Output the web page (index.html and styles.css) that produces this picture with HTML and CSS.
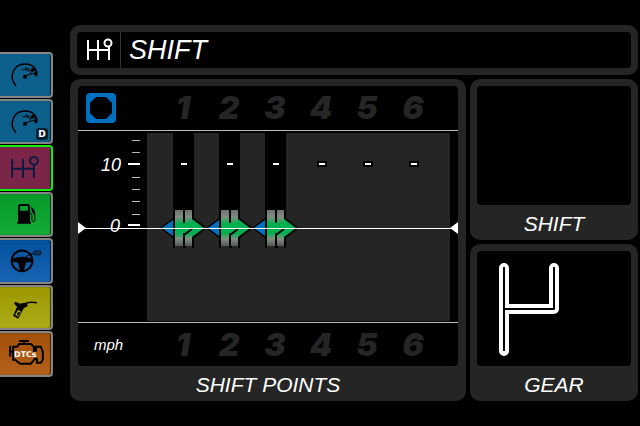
FILE: index.html
```html
<!DOCTYPE html>
<html lang="en">
  <head>
    <meta charset="UTF-8" />
    <title>Shift</title>
    <link rel="stylesheet" href="styles.css">
  </head>
  <body>
    <nav class="sidebar">
      <button class="tab teal" aria-label="Gauge">
        <svg viewBox="0 0 51 42">
          <path class="line" d="M16 32C8 24 13 10 25 10c7 0 11 4 12 9" />
          <path class="thin" d="M25 22l11-3M22 16c5-1 8 1 9 4M25 14c3 0 5 2 7 4" />
          <circle cx="25" cy="23" r="2" /><circle cx="33" cy="16" r="2" /><path d="M35 18l3 1-1 4-3-2z" />
        </svg>
      </button>
      <button class="tab teal" aria-label="Gauge D">
        <svg viewBox="0 0 51 42">
          <path class="line" d="M16 32C8 24 13 10 25 10c7 0 11 4 12 9" />
          <path class="thin" d="M25 22l11-3M22 16c5-1 8 1 9 4M25 14c3 0 5 2 7 4" />
          <circle cx="25" cy="23" r="2" /><circle cx="33" cy="16" r="2" /><path d="M35 18l3 1-1 4-3-2z" />
        </svg>
        <span class="badge">D</span>
      </button>
      <button class="tab plum active" aria-label="Shift">
        <svg viewBox="0 0 51 42">
          <path class="navy" d="M12 12v19M23 12v19M12 22h22M34 18v13" />
          <circle class="navy" cx="34" cy="14" r="4" />
        </svg>
      </button>
      <button class="tab green" aria-label="Fuel">
        <svg viewBox="0 0 51 42">
          <path fill-rule="evenodd" d="M18 28V12q0-2 2-2h8q2 0 2 2v16h1v2H17v-2zM20 12v5h8v-5z" />
          <path class="thin" d="M30 19q2 0 2 3v5q1 2 3 0v-7l-3-6" />
          <path d="M31 13l4 4v5l-3-4z" />
        </svg>
      </button>
      <button class="tab blue" aria-label="Steering">
        <svg viewBox="0 0 51 42">
          <circle class="ring" cx="22" cy="21" r="10.5" />
          <path d="M12 19q10-4 20 0v3l-6 1-2 8h-4l-2-8-6-1z" />
          <path class="thin" d="M26 17l4-3h4" />
          <rect class="navy-box" x="34" y="11" width="7" height="4" rx="1" />
        </svg>
      </button>
      <button class="tab yellow" aria-label="Fuel nozzle">
        <svg viewBox="0 0 51 42">
          <path fill-rule="evenodd" d="M15 15l5 2 5-1-1 5-6 11-5-3 4-9-3-3zM18 23l-3 5 3 2 3-5z" />
          <path d="M18 18l8-2 2 3-5 3z" />
          <path class="spout" d="M22 19l5-3q5-1 10 0" />
          <path d="M18 25l2 1-2 3-1-1z" />
        </svg>
      </button>
      <button class="tab orange" aria-label="Trouble codes">
        <svg viewBox="0 0 51 42">
          <path class="engine" d="M13 14h4l2-3h12l3 3v4h2v-4h5l2 5v8l-2 3h-4v-4h-2l-4 5H20l-5-4h-2zM24 11V8M19 8h10M10 13v11M10 19h3" />
          <text class="dtc" x="14" y="24">DTCs</text>
        </svg>
      </button>
    </nav>

    <main class="dashboard">
      <header class="title-bar">
        <div class="title-icon">
          <svg width="28" height="22" viewBox="0 0 28 22">
            <path d="M3 1v20M13 1v20M3 11h21M24 8v13" />
            <circle cx="23" cy="4" r="3.5" />
          </svg>
        </div>
        <h1>SHIFT</h1>
      </header>

      <section class="panel points">
        <div class="screen chart">
          <div class="gears">
            <div class="side">
              <button class="stop" aria-label="Stop">
                <svg width="30" height="30" viewBox="0 0 30 30"><path d="M10 4h10l6 6v10l-6 6H10l-6-6V10z" /></svg>
              </button>
            </div>
            <span>1</span><span>2</span><span>3</span><span>4</span><span>5</span><span>6</span>
          </div>
          <svg class="plot" viewBox="0 0 380 191">
            <defs>
              <linearGradient id="fade" x1="0" y1="0" x2="0" y2="1">
                <stop offset="0" stop-color="#707070" />
                <stop offset="0.2" stop-color="#7f8f80" />
                <stop offset="0.38" stop-color="#00b050" />
                <stop offset="0.65" stop-color="#00b050" />
                <stop offset="0.8" stop-color="#7f8f80" />
                <stop offset="1" stop-color="#555555" />
              </linearGradient>
              <g id="marker">
                <path d="M0 0h21v87l13 10-13 10v10h-2v-3h-6v3h-3v-3H2v3H0v-10l-13-10L0 87z" />
                <path fill="#0070c0" d="M0 89v16l-11-8z" />
                <path d="M0 79h2v38H0z" />
                <path fill="url(#fade)" d="M2 79h8v36H2zM12 79h7v36h-7z" />
                <path fill="#00b050" d="M9 92h4v10H9zM19 88l12 9-12 9z" />
                <path class="split" d="M11 117v-13l8-6" />
              </g>
            </defs>
            <rect class="area" x="69" y="2" width="303" height="188" />
            <g class="ticks">
              <path d="M54 9h8M54 21h8M54 46h8M54 58h8M54 70h8M54 83h8" />
              <path class="major" d="M50 33h12M50 94h12" />
            </g>
            <use href="#marker" x="95" y="0" />
            <use href="#marker" x="141" y="0" />
            <use href="#marker" x="187" y="0" />
            <path class="dash-edge" d="M101 33h10M147 33h10M193 33h10M239 33h10M285 33h10M331 33h10" />
            <path class="dash" d="M103 33h6M149 33h6M195 33h6M241 33h6M287 33h6M333 33h6" />
            <text x="43" y="40">10</text>
            <text x="42" y="101">0</text>
            <rect class="level" x="0" y="97" width="380" height="1" />
            <path class="end" d="M0 91l8 6-8 6zM380 91l-8 6 8 6z" />
          </svg>
          <div class="gears">
            <div class="side unit">mph</div>
            <span>1</span><span>2</span><span>3</span><span>4</span><span>5</span><span>6</span>
          </div>
        </div>
        <h2>SHIFT POINTS</h2>
      </section>

      <div class="right">
        <section class="panel">
          <div class="screen"></div>
          <h2>SHIFT</h2>
        </section>
        <section class="panel">
          <div class="screen">
            <svg class="gate" viewBox="0 0 154 114">
              <path class="outer" d="M27 17v83M27 58h50V17" />
              <path class="inner" d="M27 16v84M28 58h49V16" />
            </svg>
          </div>
          <h2>GEAR</h2>
        </section>
      </div>
    </main>
  </body>
</html>
```

FILE: styles.css
```css
* {
  box-sizing: border-box;
}

body {
  margin: 0;
  height: 100vh;
  display: flex;
  gap: 17px;
  background: #000000;
  color: #ffffff;
  font-family: "Liberation Sans", Arial, sans-serif;
}

/* Sidebar */
.sidebar {
  width: 53px;
  padding: 52px 0 49px;
  display: flex;
  flex-direction: column;
  gap: 1px;
}

.tab {
  position: relative;
  flex: 1;
  min-height: 0;
  padding: 0;
  border: 2px solid #858585;
  border-left: none;
  border-radius: 0 4px 4px 0;
  box-shadow: inset -1px 0 1px rgba(0, 0, 0, 0.6);
  cursor: pointer;
}

.tab svg {
  display: block;
  width: 100%;
  height: 100%;
}

.tab.active {
  border-color: #14f014;
}

.teal {
  background: #0e608c;
}

.plum {
  background: #7b2549;
}

.green {
  background: linear-gradient(#06982a, #16ac38);
}

.blue {
  background: linear-gradient(#03509b, #1964b4);
}

.yellow {
  background: linear-gradient(#9b9800, #adab18);
}

.orange {
  background: linear-gradient(#a35109, #b2601b);
}

.line,
.thin,
.spout,
.ring,
.navy,
.engine {
  fill: none;
  stroke: #000000;
  stroke-width: 2;
}

.line,
.spout {
  stroke-width: 1.5;
}

.thin {
  stroke-width: 1;
}

.navy {
  stroke: #0b1b3f;
}

.navy-box {
  fill: #17335c;
  stroke: #06182f;
}

.dtc {
  fill: #ffffff;
  font: bold 8px "DejaVu Sans", sans-serif;
}

.badge {
  position: absolute;
  right: 3px;
  bottom: 2px;
  width: 12px;
  height: 12px;
  border-radius: 3px;
  background: #07202f;
  color: #ffffff;
  font: bold 9px/12px "DejaVu Sans", sans-serif;
}

/* Dashboard */
.dashboard {
  flex: 1;
  display: grid;
  grid-template-columns: 396fr 168fr;
  grid-template-rows: auto 1fr;
  gap: 4px;
  padding: 25px 2px 25px 0;
}

.title-bar,
.panel {
  background: #252525;
  border-radius: 10px;
}

.title-bar {
  grid-column: 1 / -1;
  height: 50px;
  padding: 7px;
  display: flex;
}

.title-icon {
  width: 44px;
  display: flex;
  align-items: center;
  justify-content: center;
  border-right: 1px solid #333333;
  border-radius: 4px 0 0 4px;
  background: #000000;
}

.title-icon svg {
  fill: none;
  stroke: #ffffff;
  stroke-width: 2;
  overflow: visible;
}

h1,
h2 {
  margin: 0;
  font-style: italic;
  font-weight: normal;
}

h1 {
  flex: 1;
  padding-left: 8px;
  border-radius: 0 4px 4px 0;
  background: #000000;
  font-size: 27px;
  line-height: 36px;
}

h2 {
  padding-top: 3px;
  font-size: 21px;
  line-height: 32px;
  text-align: center;
}

.panel {
  padding: 7px 7px 0;
  display: flex;
  flex-direction: column;
}

.points {
  padding: 7px 8px 0;
}

.screen {
  flex: 1;
  border-radius: 4px;
  background: #000000;
}

.right {
  display: grid;
  grid-template-rows: 161fr 157fr;
  gap: 4px;
}

.chart {
  display: flex;
  flex-direction: column;
}

.gears {
  flex: 1;
  display: grid;
  grid-template-columns: 82fr repeat(6, 46fr) 22fr;
  align-items: center;
  color: #252525;
  font: italic 900 32px "Inter", sans-serif;
  text-align: center;
}

.side {
  display: flex;
  padding-left: 8px;
}

.unit {
  padding-left: 16px;
  color: #ffffff;
  font: italic 15px "Liberation Sans", Arial, sans-serif;
}

.stop {
  width: 30px;
  height: 30px;
  padding: 0;
  border: none;
  border-radius: 4px;
  background: #0070c0;
}

.stop svg {
  display: block;
}

/* Shift point plot */
.plot {
  display: block;
  width: 100%;
  border-top: 1px solid #bdbdbd;
  border-bottom: 1px solid #bdbdbd;
}

.plot text {
  fill: #ffffff;
  font-size: 18px;
  font-style: italic;
  text-anchor: end;
}

.area {
  fill: #252525;
}

.ticks {
  stroke: #b8b8b8;
  stroke-width: 1;
  shape-rendering: crispEdges;
}

.major {
  stroke: #ffffff;
  stroke-width: 2;
}

.split {
  fill: none;
  stroke: #000000;
  stroke-width: 2;
}

.dash {
  stroke: #ffffff;
  stroke-width: 2;
}

.dash-edge {
  stroke: #000000;
  stroke-width: 6;
}

.level,
.end {
  fill: #ffffff;
}

/* Gear gate */
.gate {
  display: block;
  width: 100%;
}

.gate path {
  fill: none;
  stroke-linejoin: round;
}

.gate .outer {
  stroke: #ffffff;
  stroke-width: 10;
  stroke-linecap: round;
}

.gate .inner {
  stroke: #000000;
  stroke-width: 2;
}
```
